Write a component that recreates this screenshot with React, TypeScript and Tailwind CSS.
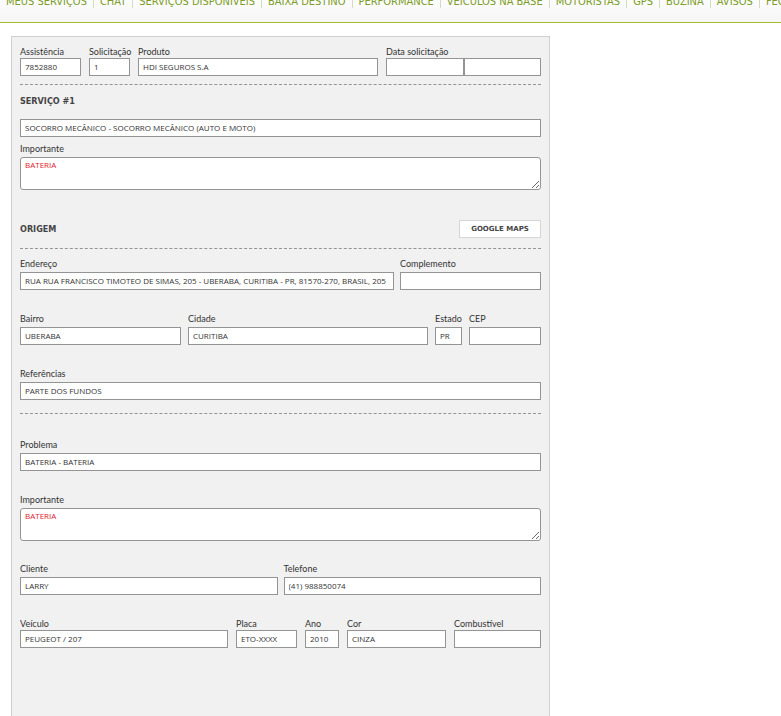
import { useId } from "react";
import clsx from "clsx";

const menu = [
  "MEUS SERVIÇOS",
  "CHAT",
  "SERVIÇOS DISPONÍVEIS",
  "BAIXA DESTINO",
  "PERFORMANCE",
  "VEÍCULOS NA BASE",
  "MOTORISTAS",
  "GPS",
  "BUZINA",
  "AVISOS",
  "FECHAMENTO",
];

const labelStyle = "font-['Lato',sans-serif] text-[9px] leading-3 whitespace-nowrap text-[#333]";

const inputStyle =
  "block h-[18px] w-full min-w-0 border border-[#949494] bg-white px-1 pb-0.5 font-['Open_Sans',sans-serif] text-[8px] text-[#333] outline-none";

interface FieldProps {
  label: string;
  value?: string;
  className?: string;
  compact?: boolean;
}

function Field({ label, value = "", className, compact }: FieldProps) {
  const id = useId();
  return (
    <div className={clsx("flex flex-col", !compact && "gap-0.5", className)}>
      <label htmlFor={id} className={labelStyle}>
        {label}
      </label>
      <input id={id} type="text" defaultValue={value} className={inputStyle} />
    </div>
  );
}

function Notes({ label, value }: { label: string; value: string }) {
  const id = useId();
  return (
    <div className="flex flex-col gap-0.5">
      <label htmlFor={id} className={labelStyle}>
        {label}
      </label>
      <textarea
        id={id}
        defaultValue={value}
        className="block h-[33px] w-full resize rounded-[3px] border border-[#949494] bg-white px-1 py-px font-['Open_Sans',sans-serif] text-[8px] leading-3 text-[#e0202c] outline-none"
      />
    </div>
  );
}

function Divider() {
  return <hr className="border-0 border-t border-dashed border-[#949494]" />;
}

export default function App() {
  return (
    <div className="min-h-screen overflow-x-hidden bg-white font-['DejaVu_Sans_Condensed',sans-serif] text-[#444]">
      {/* Menu principal */}
      <header className="h-[23px] overflow-hidden border-b border-[#a3bd31] bg-linear-to-b from-[#fcfcfc] to-[#f6f6f6]">
        <nav className="-mt-1 flex">
          {menu.map((item) => (
            <a
              key={item}
              href="#"
              className="shrink-0 border-r border-[#d3dcc0] px-1.5 text-[11px] leading-3 whitespace-nowrap text-[#7b9c26] last:border-r-0"
            >
              {item}
            </a>
          ))}
        </nav>
      </header>

      <main className="px-[11px] pt-[13px]">
        <form className="min-h-[calc(100vh-36px)] w-full max-w-[539px] border border-b-0 border-[#d0d0d0] bg-[#f1f1f1] px-2 pt-[9px] pb-16">
          <div className="flex gap-2">
            <Field compact label="Assistência" value="7852880" className="w-[61px]" />
            <Field compact label="Solicitação" value="1" className="w-[41px]" />
            <Field compact label="Produto" value="HDI SEGUROS S.A" className="flex-1" />
            <fieldset className="w-[155px]">
              <legend className={labelStyle}>Data solicitação</legend>
              <div className="flex">
                <input type="text" aria-label="Data" className={inputStyle} />
                <input type="text" aria-label="Hora" className={inputStyle} />
              </div>
            </fieldset>
          </div>

          {/* Serviço */}
          <div className="mt-2">
            <Divider />
          </div>
          <h2 className="mt-2 text-[9px] leading-4 font-bold">SERVIÇO #1</h2>
          <input
            type="text"
            aria-label="Serviço"
            defaultValue="SOCORRO MECÂNICO - SOCORRO MECÂNICO (AUTO E MOTO)"
            className={clsx(inputStyle, "mt-2.5 mb-1.5")}
          />
          <Notes label="Importante" value="BATERIA" />

          {/* Origem */}
          <div className="mt-[30px] mb-2.5 flex items-center justify-between">
            <h2 className="text-[9px] leading-4 font-bold">ORIGEM</h2>
            <button
              type="button"
              className="h-[18px] w-[82px] border border-[#d6d6d6] bg-white font-['DejaVu_Sans',sans-serif] text-[7px] font-bold whitespace-nowrap text-[#444]"
            >
              GOOGLE MAPS
            </button>
          </div>
          <Divider />
          <div className="mt-[9px] flex gap-1.5">
            <Field
              label="Endereço"
              value="RUA RUA FRANCISCO TIMOTEO DE SIMAS, 205 - UBERABA, CURITIBA - PR, 81570-270, BRASIL, 205"
              className="flex-1"
            />
            <Field label="Complemento" className="w-[141px]" />
          </div>
          <div className="mt-[23px] flex gap-[7px]">
            <Field label="Bairro" value="UBERABA" className="w-[161px]" />
            <Field label="Cidade" value="CURITIBA" className="flex-1" />
            <Field label="Estado" value="PR" className="w-[27px]" />
            <Field label="CEP" className="w-[72px]" />
          </div>
          <div className="mt-[23px] mb-[13px]">
            <Field label="Referências" value="PARTE DOS FUNDOS" />
          </div>
          <Divider />

          {/* Problema */}
          <div className="mt-[25px] flex flex-col gap-[23px]">
            <Field label="Problema" value="BATERIA - BATERIA" />
            <Notes label="Importante" value="BATERIA" />
          </div>
          <div className="mt-[22px] flex gap-1.5">
            <Field label="Cliente" value="LARRY" className="flex-1" />
            <Field label="Telefone" value="(41) 988850074" className="flex-1" />
          </div>
          <div className="mt-[23px] flex gap-2">
            <Field compact label="Veículo" value="PEUGEOT / 207" className="flex-1" />
            <Field compact label="Placa" value="ETO-XXXX" className="w-[61px]" />
            <Field compact label="Ano" value="2010" className="w-[34px]" />
            <Field compact label="Cor" value="CINZA" className="w-[99px]" />
            <Field compact label="Combustível" className="w-[87px]" />
          </div>
        </form>
      </main>
    </div>
  );
}
